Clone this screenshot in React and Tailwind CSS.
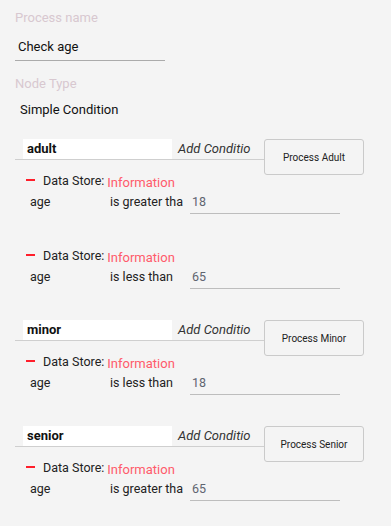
import React from "react";

const groups = [
  {
    name: "adult",
    action: "Process Adult",
    conditions: [
      { field: "age", op: "is greater tha", value: "18" },
      { field: "age", op: "is less than", value: "65" },
    ],
  },
  {
    name: "minor",
    action: "Process Minor",
    conditions: [{ field: "age", op: "is less than", value: "18" }],
  },
  {
    name: "senior",
    action: "Process Senior",
    conditions: [{ field: "age", op: "is greater tha", value: "65" }],
  },
];

const Condition = ({ field, op, value, first }) => (
  <div className={first ? "mt-[13px]" : "mt-[34px]"}>
    {/* Data store row */}
    <div className="flex items-start h-[16px]">
      <span className="ml-[11px] mt-[6px] w-[9px] h-[2px] bg-[#ff1f2b]" />
      <span className="ml-[8px] text-[12.5px] leading-[16px] text-[#222]">Data Store:</span>
      <span className="ml-[3px] mt-[2px] text-[13px] leading-[16px] text-[#ff5b6b]">Information</span>
    </div>
    {/* Field / operator / value */}
    <div className="flex items-start mt-[5px] text-[12.5px] leading-[16px] text-[#222]">
      <span className="ml-[15px] w-[80px]">{field}</span>
      <span className="w-[80px] whitespace-nowrap overflow-hidden">{op}</span>
      <div className="w-[150px] border-b border-[#bdbdbd] pl-[2px] pb-[3px] text-[#5f6470]">{value}</div>
    </div>
  </div>
);

const Group = ({ name, action, conditions, first }) => (
  <div className={first ? "mt-[21px]" : "mt-[31px]"}>
    <div className="flex items-start h-[21px]">
      <div className="w-[249px] h-[21px] flex items-start border-b border-[#cfcfcf]">
        <div className="ml-[8px] w-[149px] h-[20px] bg-white pl-[4px] text-[13px] font-bold leading-[20px] text-[#111]">
          {name}
        </div>
        <span className="ml-[6px] text-[13px] italic leading-[20px] text-[#333]">Add Conditio</span>
      </div>
      <button className="w-[100px] h-[36px] shrink-0 border border-[#cacaca] rounded-[3px] bg-[#f4f4f4] text-[10px] text-[#222]">
        {action}
      </button>
    </div>
    {conditions.map((c, i) => (
      <Condition key={i} {...c} first={i === 0} />
    ))}
  </div>
);

export default function App() {
  return (
    <div
      className="w-[391px] h-[526px] overflow-hidden bg-[#f4f4f4] pl-[15px] pt-[10px]"
      style={{ fontFamily: "Roboto, 'Liberation Sans', sans-serif" }}
    >
      <div className="text-[13px] leading-[16px] text-[#d8c8d0]">Process name</div>
      <div className="mt-[13px] w-[150px] border-b border-[#ababab] pl-[3px] pb-[5px] text-[13px] leading-[16px] text-[#111]">
        Check age
      </div>
      <div className="mt-[15px] text-[13px] leading-[16px] text-[#d8c8d0]">Node Type</div>
      <div className="mt-[10px] pl-[5px] text-[13px] leading-[16px] text-[#111]">Simple Condition</div>

      {groups.map((g, i) => (
        <Group key={g.name} {...g} first={i === 0} />
      ))}
    </div>
  );
}
